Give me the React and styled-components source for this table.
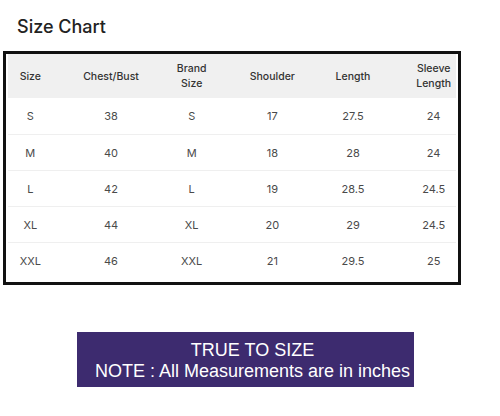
import styled, { createGlobalStyle } from "styled-components";

const GlobalStyle = createGlobalStyle`
  * {
    box-sizing: border-box;
  }

  body {
    margin: 0;
    background: #ffffff;
    font-family: Inter, "Noto Sans", sans-serif;
  }
`;

const headers = [
  ["Size"],
  ["Chest/Bust"],
  ["Brand", "Size"],
  ["Shoulder"],
  ["Length"],
  ["Sleeve", "Length"],
];

const rows = [
  ["S", "38", "S", "17", "27.5", "24"],
  ["M", "40", "M", "18", "28", "24"],
  ["L", "42", "L", "19", "28.5", "24.5"],
  ["XL", "44", "XL", "20", "29", "24.5"],
  ["XXL", "46", "XXL", "21", "29.5", "25"],
];

const App = () => {
  return (
    <Page>
      <GlobalStyle />
      <Title>Size Chart</Title>

      <Chart>
        <Row $head>
          {headers.map((lines, i) => (
            <HeadCell key={i}>
              {lines.map((line, j) => (
                <span key={j}>{line}</span>
              ))}
            </HeadCell>
          ))}
        </Row>

        {rows.map((row, i) => (
          <Row key={i}>
            {row.map((value, j) => (
              <Cell key={j}>{value}</Cell>
            ))}
          </Row>
        ))}
      </Chart>

      <Note>
        <span>TRUE TO SIZE</span>
        <span>NOTE : All Measurements are in inches</span>
      </Note>
    </Page>
  );
};

export default App;

const Page = styled.div`
  width: 500px;
  height: 416px;
  padding-top: 15px;
  display: flex;
  flex-direction: column;
  align-items: flex-start;
`;

const Title = styled.h1`
  margin: 0 0 0 17px;
  font-size: 18px;
  line-height: 24px;
  font-weight: 500;
  color: #222222;
`;

const Chart = styled.div`
  margin: 12px 0 0 3px;
  width: 458px;
  border: 3px solid #111111;
  padding: 0 2px 4px;
  display: flex;
  flex-direction: column;
`;

const Row = styled.div`
  height: ${(p) => (p.$head ? "44px" : "36px")};
  display: grid;
  grid-template-columns: repeat(6, minmax(0, 1fr));
  column-gap: 36px;
  align-items: center;
  background: ${(p) => (p.$head ? "#f0f0f0" : "#ffffff")};
  border-top: ${(p) => (p.$head ? "none" : "1px solid #efefef")};

  &:nth-child(2) {
    border-top: none;
  }
`;

const HeadCell = styled.div`
  display: flex;
  flex-direction: column;
  align-items: center;
  font-size: 10.5px;
  line-height: 15px;
  font-weight: 500;
  color: #333333;
  white-space: nowrap;
`;

const Cell = styled.div`
  text-align: center;
  font-size: 11px;
  color: #4a4a4a;
  white-space: nowrap;
`;

const Note = styled.div`
  margin: 47px 0 0 77px;
  width: 337px;
  height: 55px;
  padding: 8px 0 0 14px;
  background: #3d2b6f;
  display: flex;
  flex-direction: column;
  align-items: center;
  font-family: "Liberation Sans", Arial, sans-serif;
  font-size: 18px;
  line-height: 21px;
  color: #ffffff;
  white-space: nowrap;
`;
